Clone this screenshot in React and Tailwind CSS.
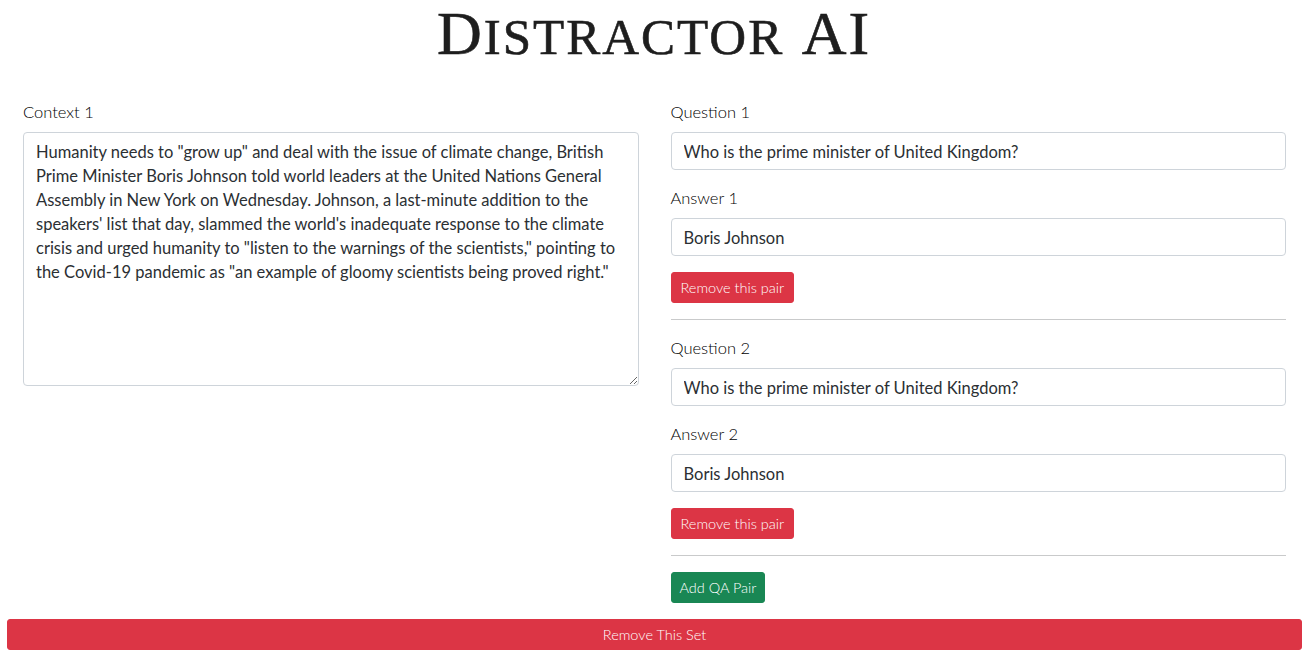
import React from "react";

const ctx = `Humanity needs to "grow up" and deal with the issue of climate change, British Prime Minister Boris Johnson told world leaders at the United Nations General Assembly in New York on Wednesday. Johnson, a last-minute addition to the speakers' list that day, slammed the world's inadequate response to the climate crisis and urged humanity to "listen to the warnings of the scientists," pointing to the Covid-19 pandemic as "an example of gloomy scientists being proved right."`;

function Field({ label, value }) {
  return (
    <div className="mb-4">
      <label className="block text-[16.5px] leading-[24px] font-light text-[#000000] mb-2">{label}</label>
      <input
        readOnly
        value={value}
        className="block w-full h-[38px] px-3 pt-[2px] border border-[#ced4da] rounded-[4px] text-[16.5px] text-[#2b2f33] bg-white outline-none"
      />
    </div>
  );
}

function Pair({ n }) {
  return (
    <div>
      <Field label={`Question ${n}`} value="Who is the prime minister of United Kingdom?" />
      <Field label={`Answer ${n}`} value="Boris Johnson" />
      <button className="h-[31px] px-[9px] bg-[#dc3545] border border-[#dc3545] text-white text-[14.5px] font-light rounded-[3px]">
        Remove this pair
      </button>
      <div className="my-4 h-px bg-[#c9cacb]" />
    </div>
  );
}

export default function App() {
  return (
    <div className="bg-white min-h-[652px] text-[#212529]" style={{ fontFamily: "Lato, 'Open Sans', sans-serif" }}>
      <div className="h-[100px] flex justify-center pt-[2px]">
        <h1
          className="text-[#1e1e1e] tracking-[2px] leading-none flex items-baseline h-[60px] pl-[2px]"
          style={{ fontFamily: "'Liberation Serif', serif", WebkitTextStroke: "0.6px #1e1e1e" }}
        >
          <span className="text-[62px]">D</span>
          <span className="text-[51px]">ISTRACTOR</span>
          <span className="text-[62px]">&nbsp;AI</span>
        </h1>
      </div>
      <div className="pl-[7px] pr-[4px]">
        <div className="grid grid-cols-2">
          <div className="px-4">
            <label className="block text-[16.5px] leading-[24px] font-light text-[#000000] mb-2">Context 1</label>
            <textarea
              readOnly
              value={ctx}
              className="block w-full h-[254px] px-3 py-[7px] border border-[#ced4da] rounded-[4px] text-[16.5px] leading-[24px] text-[#2b2f33] outline-none resize-y"
            />
          </div>
          <div className="px-4">
            <Pair n={1} />
            <Pair n={2} />
            <button className="h-[31px] px-2 bg-[#198754] border border-[#198754] text-white text-[14.5px] font-light rounded-[3px]">
              Add QA Pair
            </button>
          </div>
        </div>
        <button className="mt-4 w-full h-[31px] bg-[#dc3545] border border-[#dc3545] text-white text-[14.5px] font-light rounded-[3px]">
          Remove This Set
        </button>
      </div>
    </div>
  );
}
